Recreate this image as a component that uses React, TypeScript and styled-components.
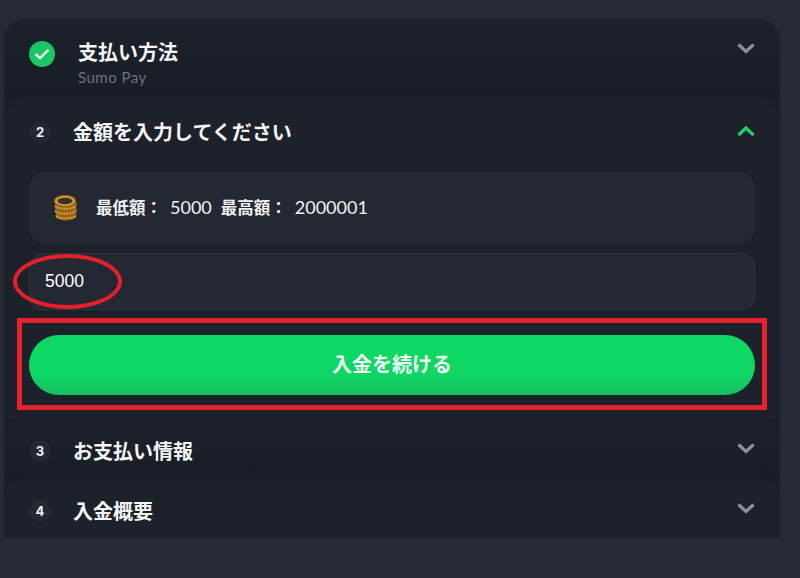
import React from 'react';
import styled, { createGlobalStyle } from 'styled-components';

const GlobalStyle = createGlobalStyle`
  html, body {
    margin: 0;
    padding: 0;
    background: #252a33;
  }
  * {
    box-sizing: border-box;
  }
`;

const Page = styled.div`
  position: relative;
  width: 800px;
  height: 578px;
  padding: 18px 20px 0 4px;
  overflow: hidden;
  background: #252a33;
  font-family: 'Noto Sans CJK JP', 'Inter', sans-serif;
  color: #fff;
`;

const Panel = styled.div`
  width: 776px;
  height: 520px;
  display: flex;
  flex-direction: column;
  background: #1a1e27;
  border-radius: 24px 24px 0 0;
`;

const Section = styled.section<{ $height: number; $flat?: boolean }>`
  height: ${(p) => p.$height}px;
  flex-shrink: 0;
  border-radius: 24px 24px 0 0;
  background: ${(p) => (p.$flat ? '#1c212a' : 'linear-gradient(180deg, #1c212a 0%, #191d26 100%)')};
`;

const Header = styled.div<{ $top: number }>`
  display: flex;
  align-items: center;
  height: 32px;
  margin-top: ${(p) => p.$top}px;
  padding: 0 25px;
`;

const StepBadge = styled.span`
  width: 22px;
  height: 22px;
  flex-shrink: 0;
  display: flex;
  align-items: center;
  justify-content: center;
  margin-right: 22px;
  border-radius: 50%;
  background: #232832;
  font-family: 'Inter', sans-serif;
  font-size: 13px;
  font-weight: 700;
  color: #f1f2f4;
`;

const CheckBadge = styled.span`
  width: 26px;
  height: 26px;
  flex-shrink: 0;
  display: flex;
  align-items: center;
  justify-content: center;
  margin-right: 23px;
  border-radius: 50%;
  background: #19c765;
  transform: translateY(2px);
`;

const Title = styled.h3`
  flex: 1;
  margin: 0;
  font-size: 20px;
  line-height: 32px;
  font-weight: 700;
  color: #f4f5f6;
`;

const Chevron = styled.svg<{ $active?: boolean; $shift: number }>`
  width: 20px;
  height: 14px;
  margin-right: -1px;
  transform: translateY(${(p) => p.$shift}px);
  fill: none;
  stroke: ${(p) => (p.$active ? '#1fcf6c' : '#8b909a')};
  stroke-width: 3.2;
`;

const SubTitle = styled.div`
  margin: 0 0 0 74px;
  font-family: 'Lato', sans-serif;
  font-size: 15px;
  line-height: 18px;
  letter-spacing: 0.5px;
  color: #6c727d;
`;

const Body = styled.div`
  display: flex;
  flex-direction: column;
  padding: 0 25px;
`;

const LimitBox = styled.div`
  display: flex;
  align-items: center;
  height: 71px;
  margin-top: 24px;
  padding: 0 0 2px 23px;
  border-radius: 16px;
  background: #232832;
`;

const Coin = styled.svg`
  width: 28px;
  height: 28px;
  margin-right: 16px;
`;

const LimitText = styled.div`
  display: flex;
  gap: 9px;
  font-size: 16.5px;
  font-weight: 700;
  color: #f1f2f4;
`;

const LimitValue = styled.span`
  margin-left: 8px;
  font-family: 'Lato', sans-serif;
  font-size: 18px;
  font-weight: 400;
`;

const AmountInput = styled.input`
  height: 57px;
  margin-top: 10px;
  padding: 0 15px;
  border: 1px solid #2e333e;
  border-radius: 13px;
  outline: none;
  background: #232832;
  font-family: 'Liberation Sans', Arial, sans-serif;
  font-size: 17.5px;
  color: #fff;
`;

const SubmitButton = styled.button`
  height: 60px;
  margin-top: 25px;
  padding: 0 0 4px;
  border: 0;
  border-radius: 30px;
  background: linear-gradient(180deg, #0cd964 0%, #0fd663 65%, #15c05f 100%);
  font-family: 'Noto Sans CJK JP', sans-serif;
  font-size: 20px;
  font-weight: 700;
  color: #f0f9f3;
`;

const MarkEllipse = styled.div`
  position: absolute;
  left: 13px;
  top: 254px;
  width: 109px;
  height: 55px;
  border: 4px solid #e5202b;
  border-radius: 50%;
`;

const MarkRect = styled.div`
  position: absolute;
  left: 17px;
  top: 318px;
  width: 750px;
  height: 92px;
  border: 5px solid #e5202b;
`;

function ChevronIcon({ up, shift }: { up?: boolean; shift: number }) {
  return (
    <Chevron viewBox="0 0 20 14" $active={up} $shift={shift}>
      <path d={up ? 'M2.5 11 10 4l7.5 7' : 'M2.5 3.5 10 10.5l7.5-7'} />
    </Chevron>
  );
}

function CoinIcon() {
  return (
    <Coin viewBox="0 0 28 28">
      <path
        d="M2 8c0-4 5-6 11-6s11 2 11 6l1 3-1 3 1 3-1 3 .5 3c-1 3-6 4.500-11 4.500s-9-1.500-10-4.500l.5-3-1-3 .8-3-1-3z"
        fill="#96641a"
      />
      <ellipse cx="13" cy="8" rx="10" ry="5" fill="#cf9a34" />
      <ellipse cx="13" cy="8" rx="7.500" ry="3.300" fill="#3a3122" />
      <path
        d="M3 13c3 3.500 17 3.500 21 0M3 18c3 3.500 17 3.500 21 0M4 23c3 3 16 3 20 0"
        stroke="#e0ac40"
        strokeWidth="1.6"
        fill="none"
        strokeDasharray="2 1"
      />
    </Coin>
  );
}

export default function App(): JSX.Element {
  return (
    <>
      <GlobalStyle />
      <Page>
        <Panel>
          <Section $height={80}>
            <Header $top={18}>
              <CheckBadge>
                <svg width="16" height="12" viewBox="0 0 16 12" fill="none" stroke="#e9f9ef" strokeWidth="2.4">
                  <path d="M1.5 6 6 10.2 14.5 1.8" />
                </svg>
              </CheckBadge>
              <Title>支払い方法</Title>
              <ChevronIcon shift={-4} />
            </Header>
            <SubTitle>Sumo Pay</SubTitle>
          </Section>
          <Section $height={320} $flat>
            <Header $top={18}>
              <StepBadge>2</StepBadge>
              <Title>金額を入力してください</Title>
              <ChevronIcon up shift={-1} />
            </Header>
            <Body>
              <LimitBox>
                <CoinIcon />
                <LimitText>
                  <span>
                    最低額：<LimitValue>5000</LimitValue>
                  </span>
                  <span>
                    最高額：<LimitValue>2000001</LimitValue>
                  </span>
                </LimitText>
              </LimitBox>
              <AmountInput defaultValue="5000" />
              <SubmitButton>入金を続ける</SubmitButton>
            </Body>
          </Section>
          <Section $height={60}>
            <Header $top={17}>
              <StepBadge>3</StepBadge>
              <Title>お支払い情報</Title>
              <ChevronIcon shift={-3} />
            </Header>
          </Section>
          <Section $height={60} $flat>
            <Header $top={17}>
              <StepBadge>4</StepBadge>
              <Title>入金概要</Title>
              <ChevronIcon shift={-3} />
            </Header>
          </Section>
        </Panel>
        <MarkEllipse />
        <MarkRect />
      </Page>
    </>
  );
}
